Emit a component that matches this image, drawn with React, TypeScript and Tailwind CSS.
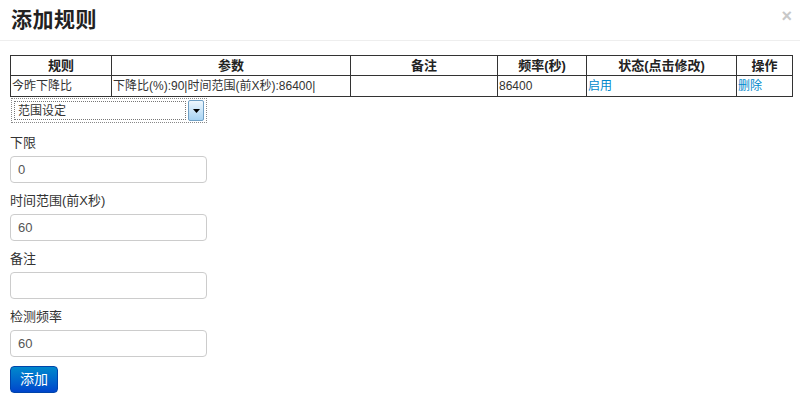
import React from "react";

const font = { fontFamily: '"Liberation Sans", "Noto Sans CJK SC", sans-serif' };

function Field({ label, value }: { label: string; value: string }) {
  return (
    <div>
      <div className="text-[13px] leading-[17px] mb-[5px] text-[#333]">{label}</div>
      <div className="w-[197px] h-[27px] mb-[9px] border border-[#ccc] rounded-[4px] flex items-center pl-[7px] text-[13px] text-[#555] bg-white">
        {value}
      </div>
    </div>
  );
}

export default function App() {
  const th = "border border-[#333] text-center font-bold text-[13px] text-[#222] p-0 h-[20px] leading-[18px]";
  const td = "border border-[#333] text-left text-[12px] text-[#333] p-0 pl-[1px] h-[21px] leading-[19px] whitespace-nowrap";
  return (
    <div className="w-[800px] h-[413px] bg-white overflow-hidden relative" style={font}>
      <div className="h-[41px] border-b border-[#eee] flex items-center justify-between pl-[11px] pr-[8px]">
        <h3 className="text-[21px] font-bold text-[#222] leading-none tracking-[0.5px] mt-[-4px]" style={{ fontFamily: '"Noto Sans CJK SC", sans-serif' }}>添加规则</h3>
        <span className="text-[18px] font-bold text-[#c8c8c8] leading-none mt-[-8px]">×</span>
      </div>
      <div className="px-[10px] pt-[14px]">
        <table className="border-collapse table-fixed w-[782px]">
          <colgroup>
            <col className="w-[101px]" />
            <col className="w-[239px]" />
            <col className="w-[147px]" />
            <col className="w-[89px]" />
            <col className="w-[150px]" />
            <col className="w-[56px]" />
          </colgroup>
          <thead>
            <tr>
              <th className={th}>规则</th>
              <th className={th}>参数</th>
              <th className={th}>备注</th>
              <th className={th}>频率(秒)</th>
              <th className={th}>状态(点击修改)</th>
              <th className={th}>操作</th>
            </tr>
          </thead>
          <tbody>
            <tr>
              <td className={td}>今昨下降比</td>
              <td className={td}>下降比(%):90|时间范围(前X秒):86400|</td>
              <td className={td}></td>
              <td className={td}>86400</td>
              <td className={td}><span className="text-[#0088cc]">启用</span></td>
              <td className={td}><span className="text-[#0088cc]">删除</span></td>
            </tr>
          </tbody>
        </table>
        <div className="mt-[1px] ml-[1px] w-[196px] h-[25px] border border-dotted border-[#888] flex items-center p-[2px] gap-[2px] bg-white">
          <div className="flex-1 h-full border border-dotted border-[#777] flex items-center pl-[3px] text-[12px] text-[#333]">范围设定</div>
          <div className="w-[16px] h-[21px] border border-[#6f9fc4] rounded-[2px] bg-gradient-to-b from-[#eef7fd] to-[#a7d3f3] flex items-center justify-center">
            <svg width="7" height="4" viewBox="0 0 7 4"><path d="M0 0H7L3.5 4Z" fill="#000" /></svg>
          </div>
        </div>
        <div className="mt-[11px]">
          <Field label="下限" value="0" />
          <Field label="时间范围(前X秒)" value="60" />
          <Field label="备注" value="" />
          <Field label="检测频率" value="60" />
        </div>
        <button className="w-[48px] h-[27px] rounded-[4px] border border-[#0044aa] bg-gradient-to-b from-[#0088cc] to-[#0044cc] text-white text-[14px] flex items-center justify-center">添加</button>
      </div>
    </div>
  );
}
